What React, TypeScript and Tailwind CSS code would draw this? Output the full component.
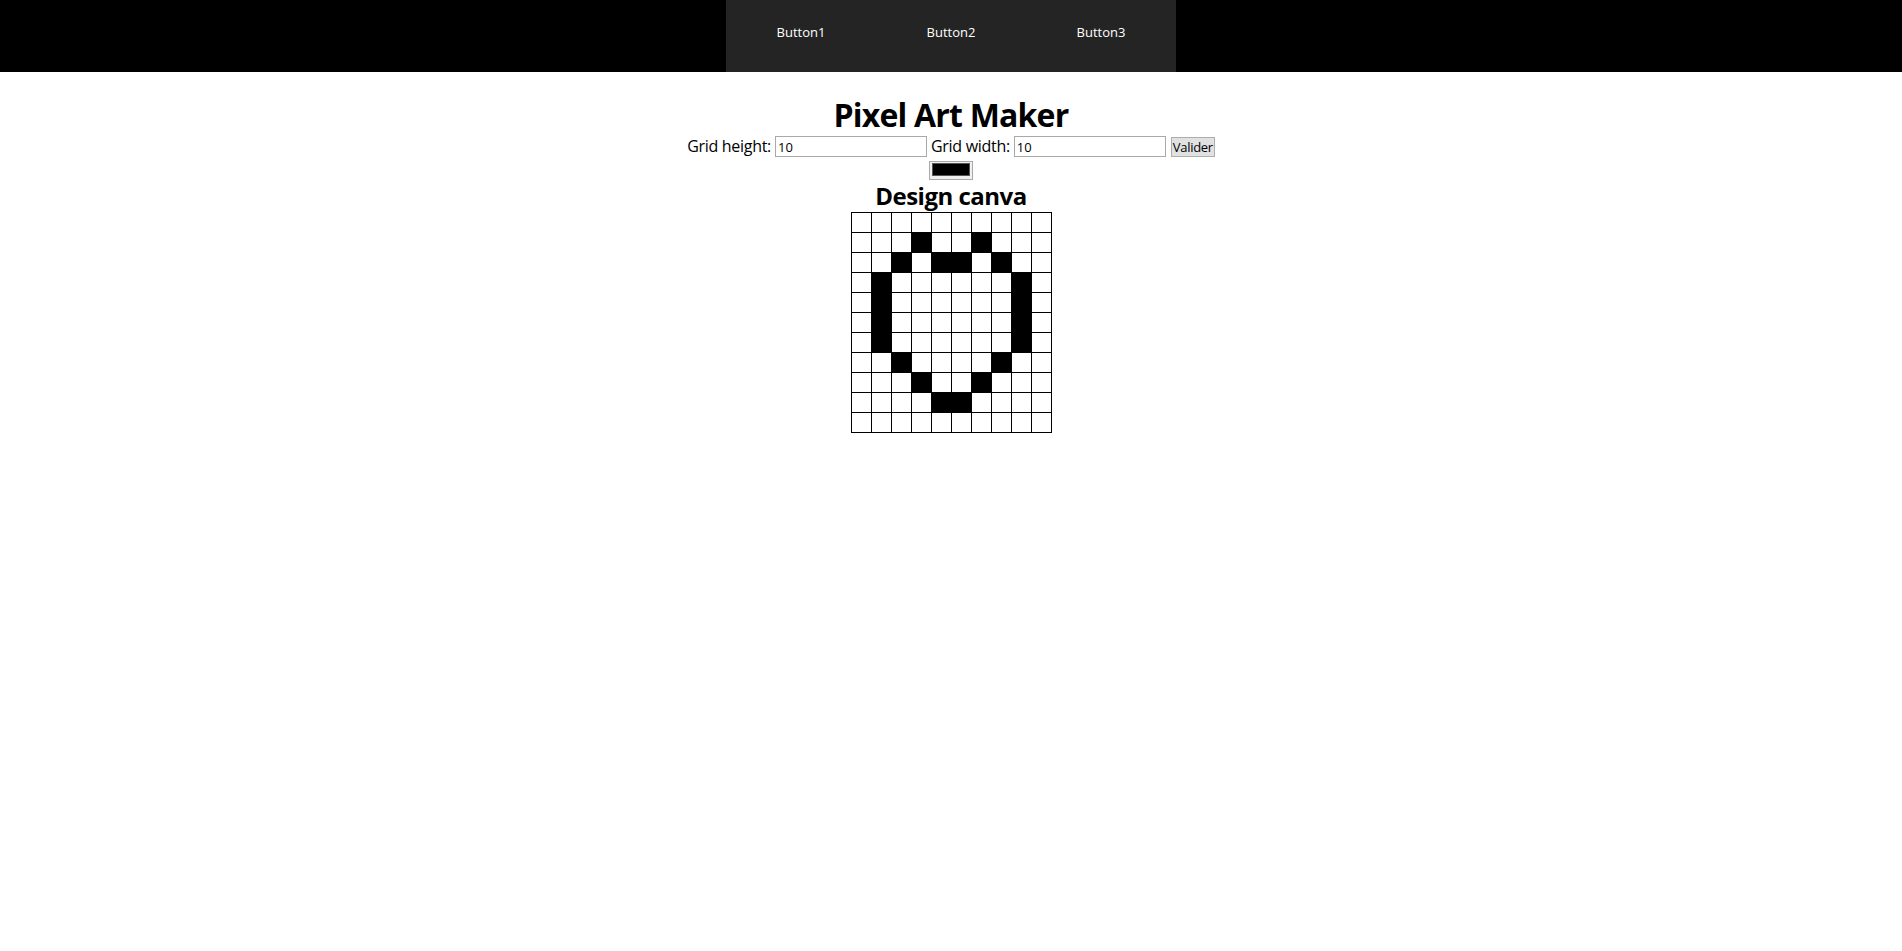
const ROWS = 11;
const COLS = 10;

// cellules noircies du dessin (ligne, colonne)
const filled: Record<number, number[]> = {
  1: [3, 6],
  2: [2, 4, 5, 7],
  3: [1, 8],
  4: [1, 8],
  5: [1, 8],
  6: [1, 8],
  7: [2, 7],
  8: [3, 6],
  9: [4, 5],
};

function NavButton({ label }: { label: string }) {
  return (
    <button className="flex-1 flex items-center justify-center pb-[6px] text-[13px] text-white">
      {label}
    </button>
  );
}

function Canvas() {
  const cells = [];
  for (let r = 0; r < ROWS; r++) {
    for (let c = 0; c < COLS; c++) {
      const on = (filled[r] ?? []).includes(c);
      cells.push(
        <div key={`${r}-${c}`} className={on ? "bg-black" : "bg-white"} />
      );
    }
  }
  return (
    <div className="mt-[2px] grid grid-cols-[repeat(10,19px)] grid-rows-[repeat(11,19px)] gap-[1px] bg-black p-[1px]">
      {cells}
    </div>
  );
}

export default function App() {
  return (
    <div className="min-h-screen bg-white text-black font-['Open_Sans','Noto_Sans',sans-serif]">
      <header className="h-[72px] bg-black flex justify-center">
        <nav className="w-[450px] bg-[#242424] flex">
          <NavButton label="Button1" />
          <NavButton label="Button2" />
          <NavButton label="Button3" />
        </nav>
      </header>

      <main className="flex flex-col items-center">
        <h1 className="mt-[23px] text-[32px] leading-[40px] font-bold tracking-[-0.8px]">
          Pixel Art Maker
        </h1>

        <form className="mt-[1px] flex items-start justify-center text-[16px]">
          <label className="mt-[1px] leading-[18px] tracking-[-0.3px]">Grid height:</label>
          <input
            type="number"
            defaultValue="10"
            className="ml-[4px] w-[152px] h-[21px] border border-[#a9a9a9] px-[2px] text-[13px] leading-none outline-none"
          />
          <label className="ml-[4px] mt-[1px] leading-[18px] tracking-[-0.3px]">Grid width:</label>
          <input
            type="number"
            defaultValue="10"
            className="ml-[4px] w-[152px] h-[21px] border border-[#a9a9a9] px-[2px] text-[13px] leading-none outline-none"
          />
          <button
            type="button"
            className="ml-[5px] mt-[1px] w-[44px] h-[20px] border border-[#adadad] bg-[#e1e1e1] text-[13px] leading-none tracking-[-0.3px]"
          >
            Valider
          </button>
        </form>

        <button className="mt-[4px] w-[44px] h-[19px] border border-[#a9a9a9] bg-[#efefef] px-[2px] pt-[1px] pb-[3px]">
          <span className="block w-full h-full bg-black border border-[#555]" />
        </button>

        <h2 className="mt-[2px] text-[24px] leading-[28px] font-bold tracking-[-0.5px]">
          Design canva
        </h2>

        <Canvas />
      </main>
    </div>
  );
}
